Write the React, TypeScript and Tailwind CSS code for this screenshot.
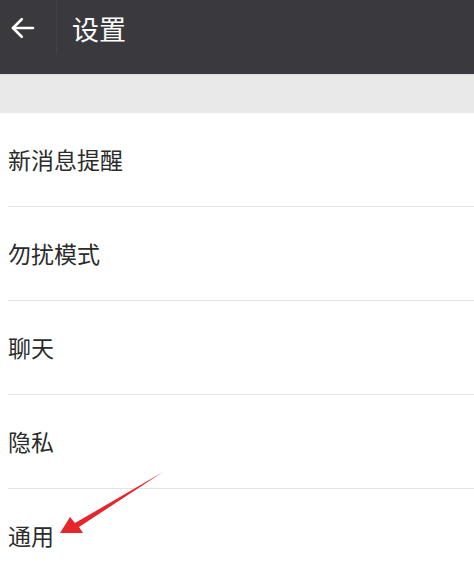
const items = ["新消息提醒", "勿扰模式", "聊天", "隐私", "通用"];

export default function App() {
  return (
    <div
      className="relative w-[474px] h-[567px] overflow-hidden bg-white"
      style={{ fontFamily: '"Noto Sans CJK SC", "Noto Sans", sans-serif' }}
    >
      <header className="flex items-center h-[74px] bg-[#3a3a3e]">
        <div className="flex items-center justify-center w-[45px] h-full">
          <svg width="30" height="30" viewBox="0 0 24 24" fill="none" stroke="white" strokeWidth="2.1" strokeLinecap="round" strokeLinejoin="round" className="-mt-[18px]">
            <path d="M20 12H4" />
            <path d="M11 5l-7 7 7 7" />
          </svg>
        </div>
        <div className="self-start w-px h-[54px] ml-[11px] bg-[#333337] border-r border-[#434347]" />
        <h1 className="ml-[15px] -mt-[18px] text-[27px] text-white leading-none">设置</h1>
      </header>
      <div className="h-[39px] bg-[#e9e9e9] border-t border-[#dcdcdc]" />
      <ul>
        {items.map((label, i) => (
          <li key={label} className="flex flex-col">
            <div className="flex items-center h-[93px] pl-[8px] text-[23px] text-[#2b2b2b] leading-none">
              {label}
            </div>
            {i < items.length - 1 && <div className="ml-[8px] h-px bg-[#e4e4e4]" />}
          </li>
        ))}
      </ul>
      <svg className="absolute left-0 top-0 pointer-events-none" width="474" height="567">
        <polygon
          points="163,472 79,527 83,533 60,533 70,517 75,523"
          fill="#e5262b"
        />
      </svg>
    </div>
  );
}
